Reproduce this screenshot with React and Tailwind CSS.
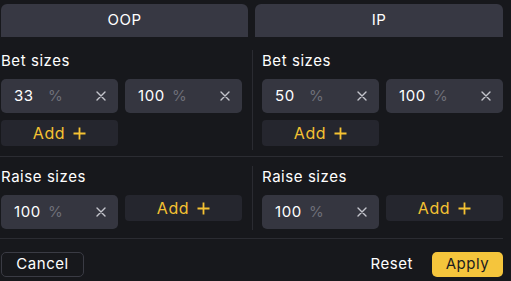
import React from "react";

const font = { fontFamily: "Inter, 'Liberation Sans', sans-serif" };

function XIcon() {
  return (
    <svg width="10" height="10" viewBox="0 0 10 10" className="shrink-0">
      <path d="M1 1L9 9M9 1L1 9" stroke="#c4c5cc" strokeWidth="1.4" strokeLinecap="round" />
    </svg>
  );
}

function PlusIcon() {
  return (
    <svg width="13" height="13" viewBox="0 0 13 13" className="shrink-0">
      <path d="M6.5 0.5V12.5M0.5 6.5H12.5" stroke="#f5c232" strokeWidth="1.8" />
    </svg>
  );
}

function SizeInput({ value }) {
  return (
    <div className="h-[34px] rounded-[5px] bg-[#353640] flex items-center pl-[13px] pr-[12px]">
      <span className="w-[34px] text-white text-[15px]">{value}</span>
      <span className="text-[#6e6f78] text-[15px]">%</span>
      <span className="flex-1" />
      <XIcon />
    </div>
  );
}

function AddButton() {
  return (
    <div className="h-[26px] rounded-[4px] bg-[#25262e] flex items-center justify-center gap-[8px]">
      <span className="text-[#f5c232] text-[16px]">Add</span>
      <PlusIcon />
    </div>
  );
}

function Column({ label, values }) {
  return (
    <div className="flex flex-col">
      <div className="h-[23px] flex items-center text-white text-[15px]">{label}</div>
      <div className="mt-[6px] grid grid-cols-2 gap-[7px] items-start">
        {values.map((v) => (
          <SizeInput key={v} value={v} />
        ))}
        <AddButton />
      </div>
    </div>
  );
}

export default function App() {
  return (
    <div className="w-[511px] h-[281px] bg-[#17181c] overflow-hidden tracking-[0.035em]" style={font}>
      <div className="w-[503px]">
        <div className="pt-[4px] pl-[1px] flex gap-[7px]">
          <div className="w-[247px] h-[33px] rounded-t-[6px] bg-[#373843] flex items-center justify-center text-white text-[15px]">
            OOP
          </div>
          <div className="flex-1 h-[33px] rounded-t-[6px] bg-[#373843] flex items-center justify-center text-white text-[15px]">
            IP
          </div>
        </div>

        <div className="pt-[13px] pb-[6px] border-b border-[#2b2c32] flex">
          <div className="w-[253px] pl-[1px] pr-[10px] pb-[4px] border-r border-[#2a2b31]">
            <Column label="Bet sizes" values={["33", "100"]} />
          </div>
          <div className="flex-1 pl-[9px] pb-[4px]">
            <Column label="Bet sizes" values={["50", "100"]} />
          </div>
        </div>

        <div className="pt-[9px] pb-[8px] border-b border-[#2b2c32] flex">
          <div className="w-[253px] pl-[1px] pr-[10px] pb-[1px] border-r border-[#2a2b31]">
            <Column label="Raise sizes" values={["100"]} />
          </div>
          <div className="flex-1 pl-[9px] pb-[1px]">
            <Column label="Raise sizes" values={["100"]} />
          </div>
        </div>

        <div className="pt-[13px] pl-[1px] flex items-center">
          <div className="h-[25px] w-[83px] rounded-[5px] border border-[#3a3b44] flex items-center justify-center text-white text-[15px]">
            Cancel
          </div>
          <div className="flex-1" />
          <div className="text-white text-[15px] mr-[19px]">Reset</div>
          <div className="h-[25px] w-[71px] rounded-[5px] bg-[#f5c53c] flex items-center justify-center text-[#1b1b1f] text-[15px]">
            Apply
          </div>
        </div>
      </div>
    </div>
  );
}
